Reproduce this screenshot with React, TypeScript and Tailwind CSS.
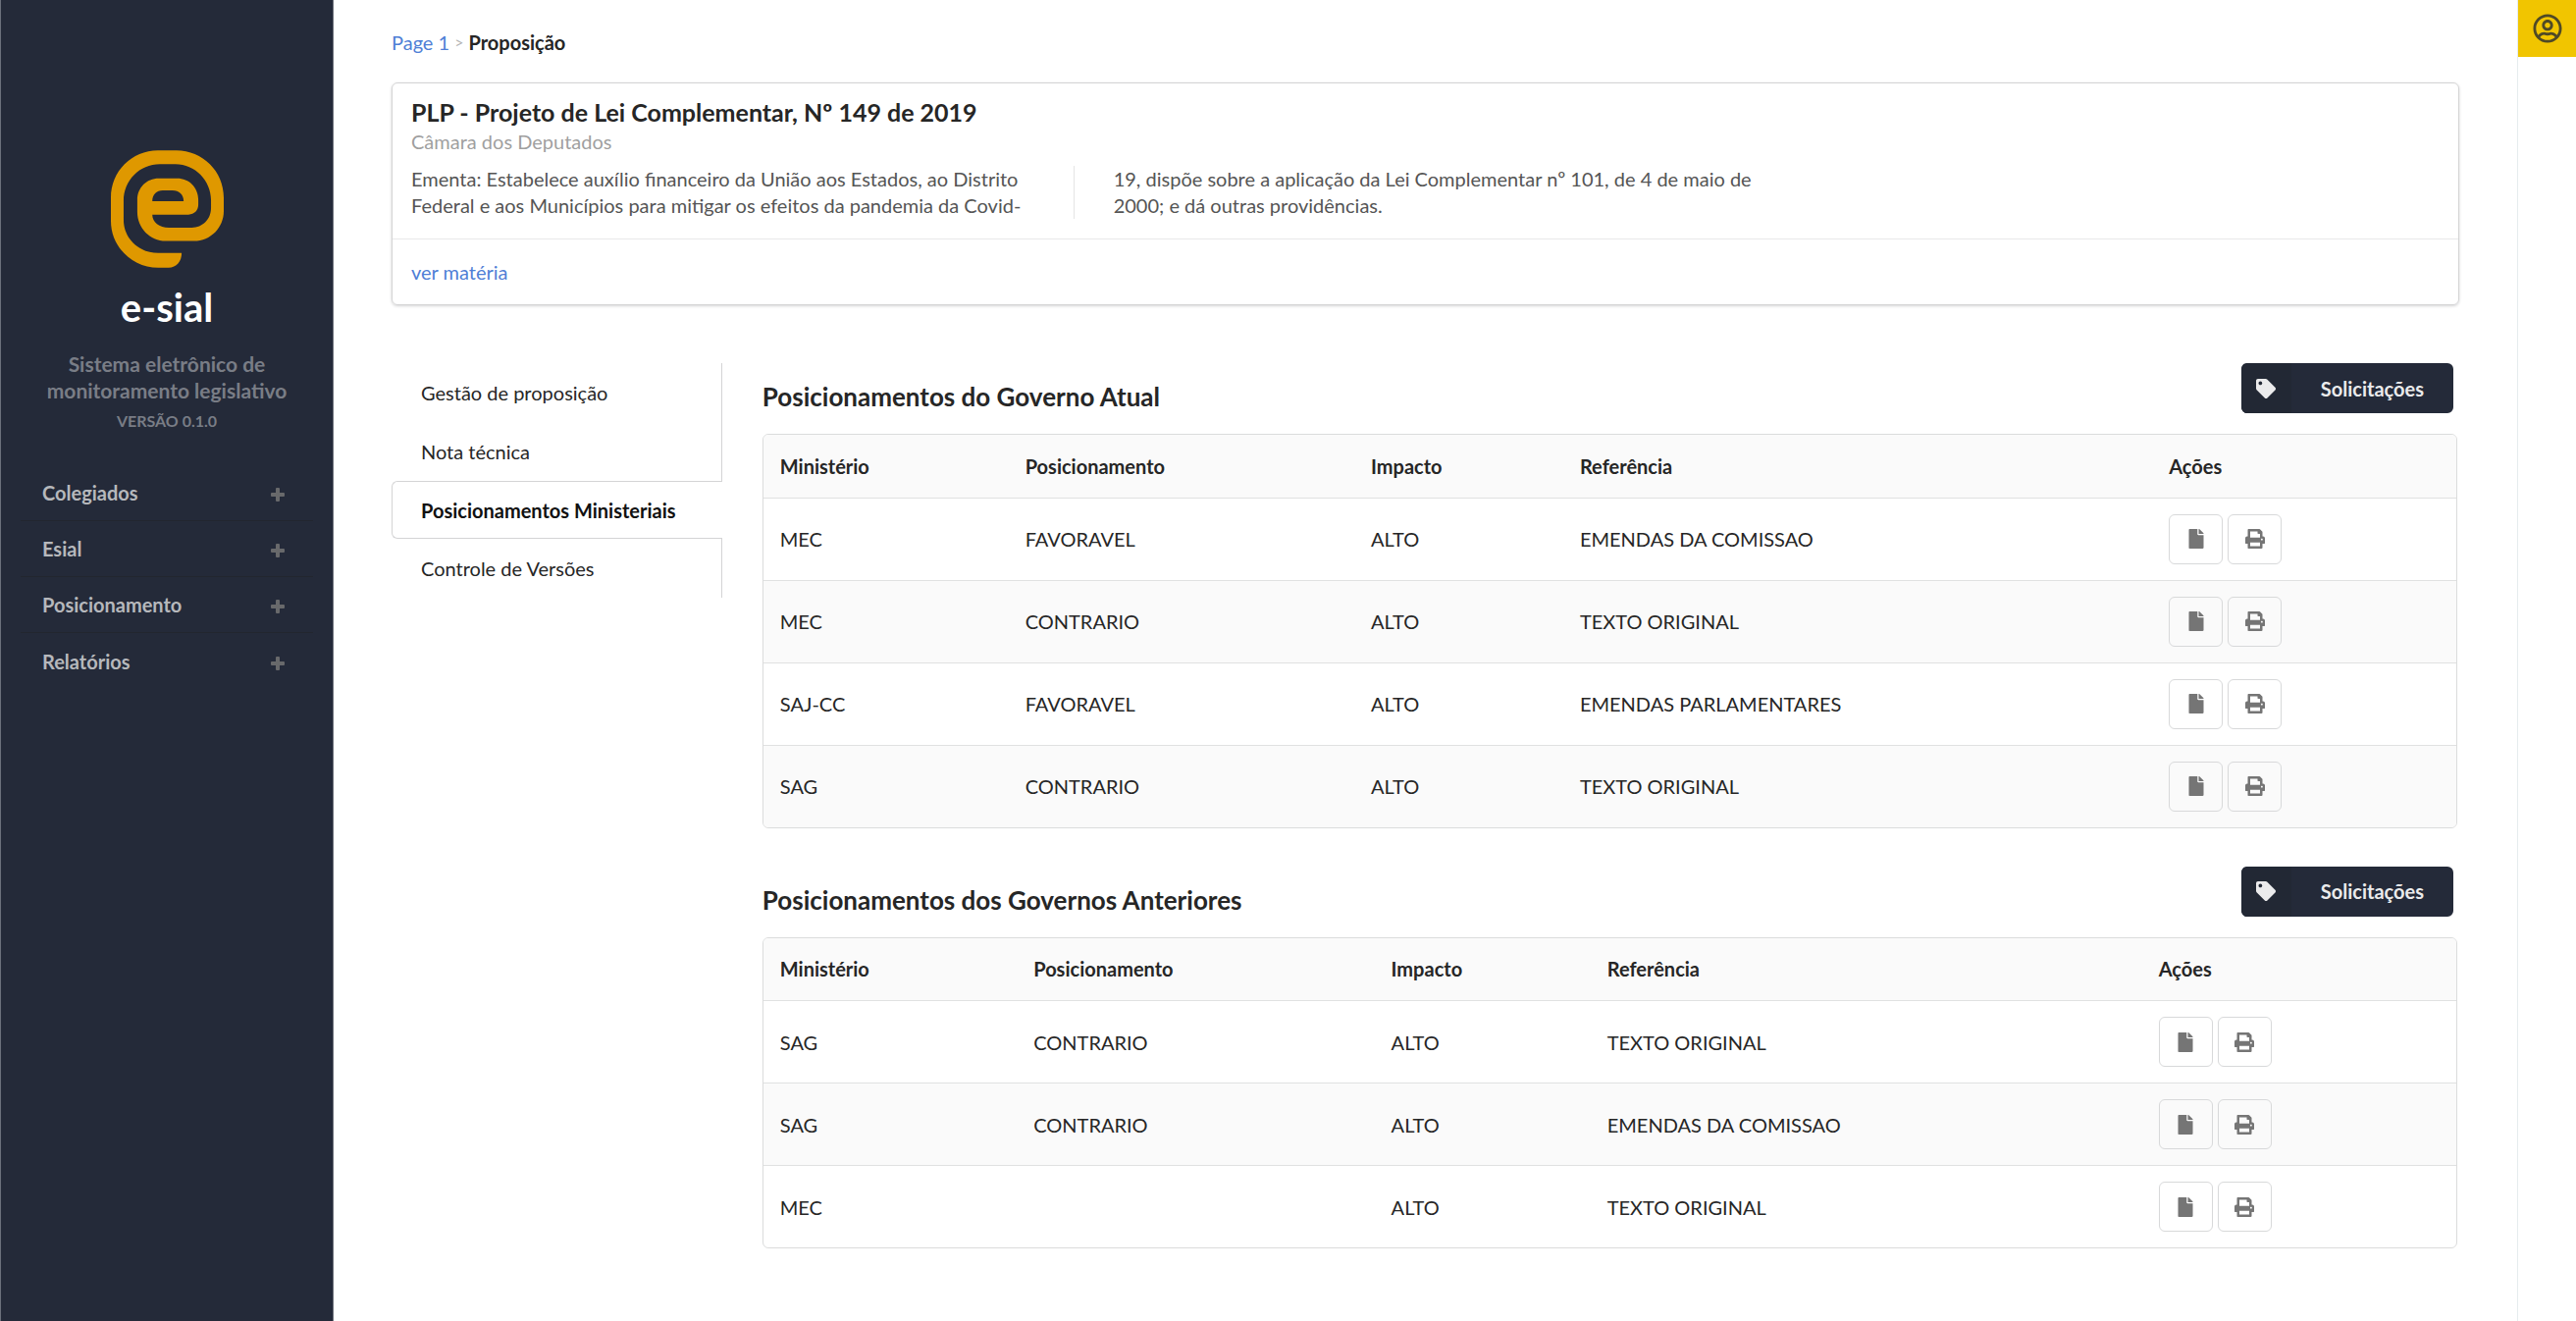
import type { ReactNode } from "react";
import { FaFile, FaRegUserCircle, FaTag } from "react-icons/fa";

type Row = [string, string, string, string];

const menu = ["Colegiados", "Esial", "Posicionamento", "Relatórios"];

const tabs = ["Gestão de proposição", "Nota técnica", "Posicionamentos Ministeriais", "Controle de Versões"];
const activeTab = 2;

const columns = ["Ministério", "Posicionamento", "Impacto", "Referência", "Ações"];

const current: Row[] = [
  ["MEC", "FAVORAVEL", "ALTO", "EMENDAS DA COMISSAO"],
  ["MEC", "CONTRARIO", "ALTO", "TEXTO ORIGINAL"],
  ["SAJ-CC", "FAVORAVEL", "ALTO", "EMENDAS PARLAMENTARES"],
  ["SAG", "CONTRARIO", "ALTO", "TEXTO ORIGINAL"],
];

const previous: Row[] = [
  ["SAG", "CONTRARIO", "ALTO", "TEXTO ORIGINAL"],
  ["SAG", "CONTRARIO", "ALTO", "EMENDAS DA COMISSAO"],
  ["MEC", "", "ALTO", "TEXTO ORIGINAL"],
];

function Logo() {
  return (
    <svg viewBox="340 98 346 360" className="h-[120px] w-[115px]" fill="#df9800" fillRule="evenodd" aria-hidden="true">
      <path d="M557 413H485C425 413 379 367 379 312V252C379 190 428 140 490 140H538C598 140 647 190 647 250V275C647 309 621 335 588 335H518C488 335 467 318 467 295H578C596 295 608 282 608 264V250C608 212 580 184 543 184H487C449 184 421 213 421 250V287C421 336 460 376 508 376H595C646 376 686 335 686 284V243C686 162 621 98 541 98H484C404 98 340 162 340 243V315C340 395 407 458 485 458H517C541 458 557 439 557 413ZM467 254C467 234 480 221 499 221H529C549 221 563 234 563 254Z" />
    </svg>
  );
}

function PlusIcon() {
  return (
    <svg viewBox="0 0 14 14" className="mt-1 size-[14px] text-[#68696b]" fill="currentColor" aria-hidden="true">
      <rect x="5" y="0" width="4" height="14" rx="1" />
      <rect x="0" y="5" width="14" height="4" rx="1" />
    </svg>
  );
}

function PrintIcon() {
  return (
    <svg viewBox="0 0 512 512" className="size-5" fill="currentColor" aria-hidden="true">
      <path d="M464 192h-16V81.941a24 24 0 0 0-7.029-16.97L383.029 7.029A24 24 0 0 0 366.059 0H88C74.745 0 64 10.745 64 24v168H48c-26.51 0-48 21.49-48 48v132c0 6.627 5.373 12 12 12h52v104c0 13.255 10.745 24 24 24h336c13.255 0 24-10.745 24-24V384h52c6.627 0 12-5.373 12-12V240c0-26.51-21.49-48-48-48zm-80 256H128v-96h256v96zM128 224V64h192v40c0 13.2 10.8 24 24 24h40v96H128zm304 72c-13.254 0-24-10.746-24-24s10.746-24 24-24 24 10.746 24 24-10.746 24-24 24z" />
    </svg>
  );
}

function IconButton({ label, children }: { label: string; children: ReactNode }) {
  return (
    <button
      type="button"
      aria-label={label}
      className="inline-flex h-[51px] w-[55px] items-center justify-center rounded-md border border-[#d8d9da] text-[#757575]"
    >
      {children}
    </button>
  );
}

function Positions({ title, rows }: { title: string; rows: Row[] }) {
  return (
    <section>
      <div className="flex items-start justify-between pr-1">
        <h2 className="pt-4 text-[26px] leading-9 font-bold text-[#262626]">{title}</h2>
        <button
          type="button"
          className="flex h-[51px] items-center overflow-hidden rounded-md bg-[#242a39] text-xl font-bold text-[#ebebec]"
        >
          <span className="flex h-full w-[51px] items-center justify-center bg-[#222834]">
            <FaTag className="size-5" />
          </span>
          <span className="px-[30px]">Solicitações</span>
        </button>
      </div>
      <div className="mt-5 overflow-hidden rounded-md border border-[#dbdcdc]">
        <table className="w-full text-left text-xl text-[#262626]">
          <thead className="bg-[#fafafa]">
            <tr>
              {columns.map((c) => (
                <th key={c} scope="col" className="h-16 px-[17px] font-bold">
                  {c}
                </th>
              ))}
            </tr>
          </thead>
          <tbody>
            {rows.map((row, i) => (
              <tr key={i} className="border-t border-[#e0e1e1] even:bg-[#fafafa]">
                {row.map((cell, j) => (
                  <td key={j} className="px-[17px]">
                    {cell}
                  </td>
                ))}
                <td className="px-[17px] py-4">
                  <div className="flex gap-[5px] pr-1.5">
                    <IconButton label="Abrir documento">
                      <FaFile className="size-5" />
                    </IconButton>
                    <IconButton label="Imprimir">
                      <PrintIcon />
                    </IconButton>
                  </div>
                </td>
              </tr>
            ))}
          </tbody>
        </table>
      </div>
    </section>
  );
}

export default function App() {
  return (
    <div className="flex min-h-screen bg-white font-['Lato',sans-serif] text-xl text-[#262626]">
      <aside className="flex w-[340px] shrink-0 flex-col items-center border-x border-[#6b707b] bg-[#242a39] px-5 pt-[153px]">
        <Logo />
        <h1 className="mt-4 text-[40px] leading-[48px] font-bold text-white">e-sial</h1>
        <p className="mt-5 text-center text-[21px] leading-[27px] font-bold text-[#797d86]">
          Sistema eletrônico de
          <br />
          monitoramento legislativo
        </p>
        <p className="mt-1.5 text-base font-bold text-[#797d86]">VERSÃO 0.1.0</p>
        <nav className="mt-[33px] w-full divide-y divide-[#22262f]">
          {menu.map((item) => (
            <button
              key={item}
              type="button"
              className="flex h-[57px] w-full items-center justify-between pr-[29px] pl-[22px] font-bold text-[#b6b8bc]"
            >
              {item}
              <PlusIcon />
            </button>
          ))}
        </nav>
      </aside>

      <main className="min-w-0 flex-1 px-[59px] pt-[27px]">
        <nav aria-label="Trilha" className="flex items-center gap-[5px] leading-8">
          <a href="#" className="text-[#4f7fd6]">
            Page 1
          </a>
          <span className="text-base text-[#b5b5b5]">&gt;</span>
          <span className="font-bold">Proposição</span>
        </nav>

        <article className="mt-[25px] rounded-md border border-[#d4d4d5] shadow-[0_1px_3px_#d4d4d5]">
          <div className="px-[19px] pt-[11px] pb-5">
            <h2 className="text-[25px] leading-9 font-bold">PLP - Projeto de Lei Complementar, Nº 149 de 2019</h2>
            <p className="leading-[25px] text-[#9f9f9f]">Câmara dos Deputados</p>
            <p className="mt-3 columns-3 gap-20 [column-rule:1px_solid_#e5e5e5] leading-[27px] text-[#555555]">
              Ementa: Estabelece auxílio financeiro da União aos Estados, ao Distrito Federal e aos Municípios para
              mitigar os efeitos da pandemia da Covid-
              <wbr />
              <span className="whitespace-nowrap">
                19, dispõe sobre a aplicação da Lei Complementar nº 101, de 4 de maio de
              </span>{" "}
              2000; e dá outras providências.
            </p>
          </div>
          <div className="border-t border-[#e8e8e9] px-[19px] pt-5 pb-[19px]">
            <a href="#" className="block leading-[27px] text-[#4f7fd6]">
              ver matéria
            </a>
          </div>
        </article>

        <div className="mt-[59px] flex items-start gap-[41px] pr-[2px]">
          <div role="tablist" className="flex w-[16%] shrink-0 flex-col">
            {tabs.map((tab, i) => (
              <button
                key={tab}
                type="button"
                role="tab"
                aria-selected={i === activeTab}
                className={
                  i === activeTab
                    ? "h-[59px] rounded-l-md border border-r-0 border-[#d4d4d5] pl-[29px] text-left font-bold text-[#111111]"
                    : "h-[60px] border-r border-[#d4d4d5] pl-[30px] text-left"
                }
              >
                {tab}
              </button>
            ))}
          </div>
          <div className="flex min-w-0 flex-1 flex-col gap-[39px]">
            <Positions title="Posicionamentos do Governo Atual" rows={current} />
            <Positions title="Posicionamentos dos Governos Anteriores" rows={previous} />
          </div>
        </div>
      </main>

      <aside className="w-[60px] shrink-0 border-l border-[#e6ecee]">
        <button
          type="button"
          aria-label="Usuário"
          className="flex h-[58px] w-full items-center justify-center bg-[#f1c500] text-[#4f4a26]"
        >
          <FaRegUserCircle className="size-[30px]" />
        </button>
      </aside>
    </div>
  );
}
